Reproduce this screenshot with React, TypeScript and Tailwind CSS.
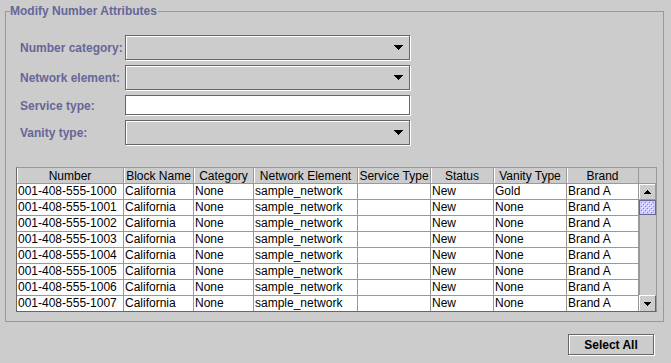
import React from "react";

const cols = [
  { name: "Number", w: 107 },
  { name: "Block Name", w: 70 },
  { name: "Category", w: 60 },
  { name: "Network Element", w: 104 },
  { name: "Service Type", w: 73 },
  { name: "Status", w: 63 },
  { name: "Vanity Type", w: 73 },
  { name: "Brand", w: 72 },
];

const rows = Array.from({ length: 8 }, (_, i) => [
  `001-408-555-100${i}`,
  "California",
  "None",
  "sample_network",
  "",
  "New",
  i === 0 ? "Gold" : "None",
  "Brand A",
]);

function Arrow() {
  return (
    <svg width="9" height="5" viewBox="0 0 9 5" shapeRendering="crispEdges">
      <polygon points="0,0 9,0 4.5,5" fill="#000" />
    </svg>
  );
}

function Combo() {
  return (
    <div className="h-[26px] w-[286px]">
      <div className="h-[25px] w-[285px] border border-[#666666] bg-[#cccccc] shadow-[1px_1px_0_#ffffff,inset_1px_1px_0_#ffffff] flex items-center justify-end pr-[6px]">
        <Arrow />
      </div>
    </div>
  );
}

function TextField() {
  return (
    <div className="h-[21px] w-[286px]">
      <div className="h-[20px] w-[285px] border border-[#666666] bg-white shadow-[1px_1px_0_#ffffff]" />
    </div>
  );
}

function Label({ children }: { children: React.ReactNode }) {
  return <div className="flex items-center font-bold text-[#666699] text-[12px]">{children}</div>;
}

export default function App() {
  return (
    <div className="w-[671px] h-[363px] bg-[#cccccc] overflow-hidden font-['Liberation_Sans',Arial,sans-serif] text-[12px] text-black pt-[4px]">
      <fieldset className="ml-[5px] w-[659px] border border-[#999999] pb-[9px]">
        <legend className="ml-[4px] pr-[1px] font-bold text-[#666699] text-[12px] leading-[15px]">
          Modify Number Attributes
        </legend>
        <div className="mt-[16px] ml-[14px] grid grid-cols-[105px_286px] gap-y-[4px]">
          <Label>Number category:</Label>
          <Combo />
          <Label>Network element:</Label>
          <Combo />
          <Label>Service type:</Label>
          <TextField />
          <Label>Vanity type:</Label>
          <Combo />
        </div>
        <div className="mt-[21px] ml-[10px] w-[641px] flex border-l border-r border-b border-t border-l-[#666666] border-b-[#666666] border-t-[#999999] border-r-[#999999]">
          <div className="flex flex-col">
            <div className="flex h-[16px]">
              {cols.map((c) => (
                <div
                  key={c.name}
                  style={{ width: c.w }}
                  className="h-[16px] border-r border-b border-[#999999] bg-[#cccccc] shadow-[inset_1px_0_0_#ffffff] flex items-center justify-center leading-[14px] whitespace-nowrap overflow-hidden"
                >
                  {c.name}
                </div>
              ))}
            </div>
            {rows.map((r, ri) => (
              <div key={ri} className={"flex bg-white " + (ri < rows.length - 1 ? "h-[16px]" : "h-[15px]")}>
                {r.map((v, ci) => (
                  <div
                    key={ci}
                    style={{ width: cols[ci].w }}
                    className={
                      "border-r border-[#999999] pl-[1px] leading-[15px] whitespace-nowrap overflow-hidden " +
                      (ri < rows.length - 1 ? "h-[16px] border-b" : "h-[15px]")
                    }
                  >
                    {v}
                  </div>
                ))}
              </div>
            ))}
          </div>
          <div className="w-[17px] flex flex-col">
            <div className="h-[16px] bg-[#cccccc] border-b border-[#999999]" />
            <div className="h-[16px] bg-[#cccccc] border-r border-b border-[#999999] shadow-[inset_1px_1px_0_#ffffff] flex items-center justify-center">
              <svg width="7" height="4" viewBox="0 0 7 4" shapeRendering="crispEdges">
                <polygon points="3.5,0 7,4 0,4" fill="#000" />
              </svg>
            </div>
            <div className="h-[15px] border border-[#666699] bg-[#ccccff]">
              <svg width="15" height="13" className="block">
                <defs>
                  <pattern id="bumps" width="4" height="4" patternUnits="userSpaceOnUse">
                    <rect x="0" y="0" width="1" height="1" fill="#ffffff" />
                    <rect x="1" y="1" width="1" height="1" fill="#8888bb" />
                    <rect x="2" y="2" width="1" height="1" fill="#ffffff" />
                    <rect x="3" y="3" width="1" height="1" fill="#8888bb" />
                  </pattern>
                </defs>
                <rect x="1" y="1" width="13" height="11" fill="url(#bumps)" />
              </svg>
            </div>
            <div className="flex-1 bg-[#cccccc] border-l border-[#999999]" />
            <div className="h-[16px] bg-[#cccccc] border-r border-[#666666] border-t border-t-[#ffffff] shadow-[inset_1px_0_0_#ffffff] flex items-center justify-center">
              <svg width="7" height="4" viewBox="0 0 7 4" shapeRendering="crispEdges">
                <polygon points="0,0 7,0 3.5,4" fill="#000" />
              </svg>
            </div>
          </div>
        </div>
      </fieldset>
      <div className="flex justify-end pr-[17px] mt-[12px]">
        <div className="w-[86px] h-[21px] border border-[#666666] bg-[#cccccc] shadow-[1px_1px_0_#ffffff,inset_1px_1px_0_#ffffff] flex items-center justify-center font-bold text-[12px]">
          Select All
        </div>
      </div>
    </div>
  );
}
